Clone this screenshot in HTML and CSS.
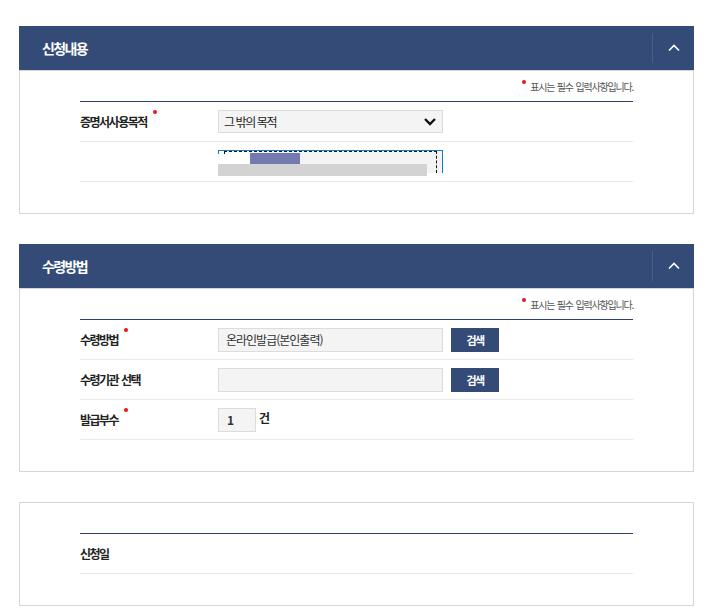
FILE: index.html
```html
<!DOCTYPE html>
<html lang="ko">
<head>
<meta charset="utf-8">
<title>신청내용</title>
<link rel="stylesheet" href="styles.css">
</head>
<body>
<div class="page">
  <section class="panel">
    <div class="panel-head">
      <h2 class="panel-title">신청내용</h2>
      <div class="panel-toggle">
        <svg width="12" height="8" viewBox="0 0 12 8"><path d="M1 6.5 L6 1.5 L11 6.5" fill="none" stroke="#fff" stroke-width="1.6"/></svg>
      </div>
    </div>
    <div class="panel-body">
      <p class="req-note"><span class="dot note-dot"></span>표시는 필수 입력사항입니다.</p>
      <div class="form-table">
        <div class="form-row">
          <div class="form-label">증명서사용목적<span class="dot label-dot"></span></div>
          <div class="form-field">
            <div class="select-box">
              <span class="select-text">그 밖의 목적</span>
              <svg class="select-arrow" width="14" height="9" viewBox="0 0 14 9"><path d="M2 2 L7 7 L12 2" fill="none" stroke="#111" stroke-width="2.4"/></svg>
            </div>
          </div>
        </div>
        <div class="form-row">
          <div class="form-label"></div>
          <div class="form-field">
            <div class="glitch">
              <span class="g-white"></span>
              <span class="g-purple"></span>
              <span class="g-dash"></span>
              <span class="g-tick-blue"></span>
              <span class="g-tick-dash"></span>
              <span class="g-bar"></span>
            </div>
          </div>
        </div>
      </div>
    </div>
  </section>

  <section class="panel">
    <div class="panel-head">
      <h2 class="panel-title">수령방법</h2>
      <div class="panel-toggle">
        <svg width="12" height="8" viewBox="0 0 12 8"><path d="M1 6.5 L6 1.5 L11 6.5" fill="none" stroke="#fff" stroke-width="1.6"/></svg>
      </div>
    </div>
    <div class="panel-body">
      <p class="req-note"><span class="dot note-dot"></span>표시는 필수 입력사항입니다.</p>
      <div class="form-table">
        <div class="form-row">
          <div class="form-label">수령방법<span class="dot label-dot"></span></div>
          <div class="form-field">
            <div class="text-input">온라인발급(본인출력)</div>
            <button class="btn-search">검색</button>
          </div>
        </div>
        <div class="form-row">
          <div class="form-label">수령기관 선택</div>
          <div class="form-field">
            <div class="text-input"></div>
            <button class="btn-search">검색</button>
          </div>
        </div>
        <div class="form-row">
          <div class="form-label">발급부수<span class="dot label-dot"></span></div>
          <div class="form-field">
            <div class="text-input small-input">1</div>
            <span class="unit">건</span>
          </div>
        </div>
      </div>
    </div>
  </section>

  <section class="panel">
    <div class="panel-body no-head">
      <div class="form-table">
        <div class="form-row">
          <div class="form-label">신청일</div>
          <div class="form-field"></div>
        </div>
      </div>
    </div>
  </section>
</div>
</body>
</html>
```

FILE: styles.css
```css
* { box-sizing: border-box; }
html, body { margin: 0; padding: 0; background: #fff; }
body {
  font-family: "Noto Sans CJK KR", "Noto Sans", sans-serif;
  color: #222;
}
.page {
  padding: 26px 0 0 19px;
  width: 694px;
}
.panel {
  width: 675px;
  margin-bottom: 30px;
}
.panel-head {
  height: 44px;
  background: #344b78;
  display: flex;
  align-items: center;
  padding-left: 23px;
}
.panel-title {
  margin: 0;
  font-size: 14px;
  font-weight: 700;
  color: #fff;
  letter-spacing: -1.6px;
  line-height: 20px;
}
.panel-toggle {
  margin-left: auto;
  width: 42px;
  height: 30px;
  border-left: 1px solid #4a5e88;
  display: flex;
  align-items: center;
  justify-content: center;
  padding-bottom: 1px;
}
.panel-body {
  border: 1px solid #d6d6d6;
  padding: 0 60px 31px;
}
.panel-body.no-head { padding-top: 30px; }
.req-note {
  margin: 0;
  height: 30px;
  display: flex;
  justify-content: flex-end;
  align-items: center;
  font-size: 10px;
  color: #555;
  letter-spacing: -1.2px;
  word-spacing: 1px;
  line-height: 14px;
  padding-top: 1px;
}
.dot {
  display: inline-block;
  width: 4px;
  height: 4px;
  border-radius: 50%;
  background: #e8141a;
  position: relative;
}
.note-dot { margin-right: 4px; top: -5px; }
.label-dot { margin-left: 6px; top: -10px; }
.form-table { border-top: 1px solid #2f4168; }
.form-row {
  height: 40px;
  border-bottom: 1px solid #e9e9e9;
  display: flex;
  align-items: center;
}
.form-label {
  width: 138px;
  flex: none;
  font-size: 12px;
  font-weight: 700;
  color: #222;
  letter-spacing: -1.5px;
  word-spacing: 1px;
  line-height: 16px;
  display: flex;
  align-items: center;
}
.form-field {
  display: flex;
  align-items: center;
}
.select-box {
  width: 225px;
  height: 23px;
  background: #f4f4f4;
  border: 1px solid #dcdcdc;
  display: flex;
  align-items: center;
  padding: 0 5px 0 5px;
}
.select-text {
  font-size: 12px;
  color: #222;
  letter-spacing: -1.4px;
  word-spacing: 0;
  line-height: 16px;
}
.select-arrow { margin-left: auto; }
.glitch {
  width: 225px;
  height: 23px;
  background: #f4f4f4;
  border-top: 1px solid #0b7fcf;
  border-right: 1px solid #0b7fcf;
  position: relative;
}
.glitch span { position: absolute; display: block; }
.g-white { left: 0; top: 0; width: 32px; height: 13px; background: #fff; }
.g-purple { left: 32px; top: 2px; width: 50px; height: 11px; background: #7479af; }
.g-dash { left: 6px; top: 0; right: 5px; bottom: 0; border-top: 1px dashed #111; border-right: 1px dashed #111; }
.g-tick-blue { left: 0; top: 0; width: 1px; height: 3px; background: #0b7fcf; }
.g-tick-dash { left: 6px; top: 0; width: 1px; height: 3px; background: #111; }
.g-bar { left: 0; top: 13px; width: 209px; height: 12px; background: #d3d3d3; }
.text-input {
  width: 225px;
  height: 24px;
  background: #f4f4f4;
  border: 1px solid #dcdcdc;
  font-size: 12px;
  color: #333;
  letter-spacing: -1px;
  line-height: 22px;
  padding-left: 7px;
}
.small-input {
  width: 38px;
  padding-left: 8px;
  font-weight: 700;
  letter-spacing: 0;
}
.unit {
  margin-left: 3px;
  font-size: 12px;
  font-weight: 700;
  color: #222;
  line-height: 16px;
  margin-top: -3px;
}
.btn-search {
  margin-left: 8px;
  width: 48px;
  height: 24px;
  border: 0;
  background: #344b78;
  color: #fff;
  font-family: "Noto Sans CJK KR", "Noto Sans", sans-serif;
  font-size: 11px;
  font-weight: 700;
  letter-spacing: -1.5px;
  padding: 0;
  line-height: 24px;
}
```
